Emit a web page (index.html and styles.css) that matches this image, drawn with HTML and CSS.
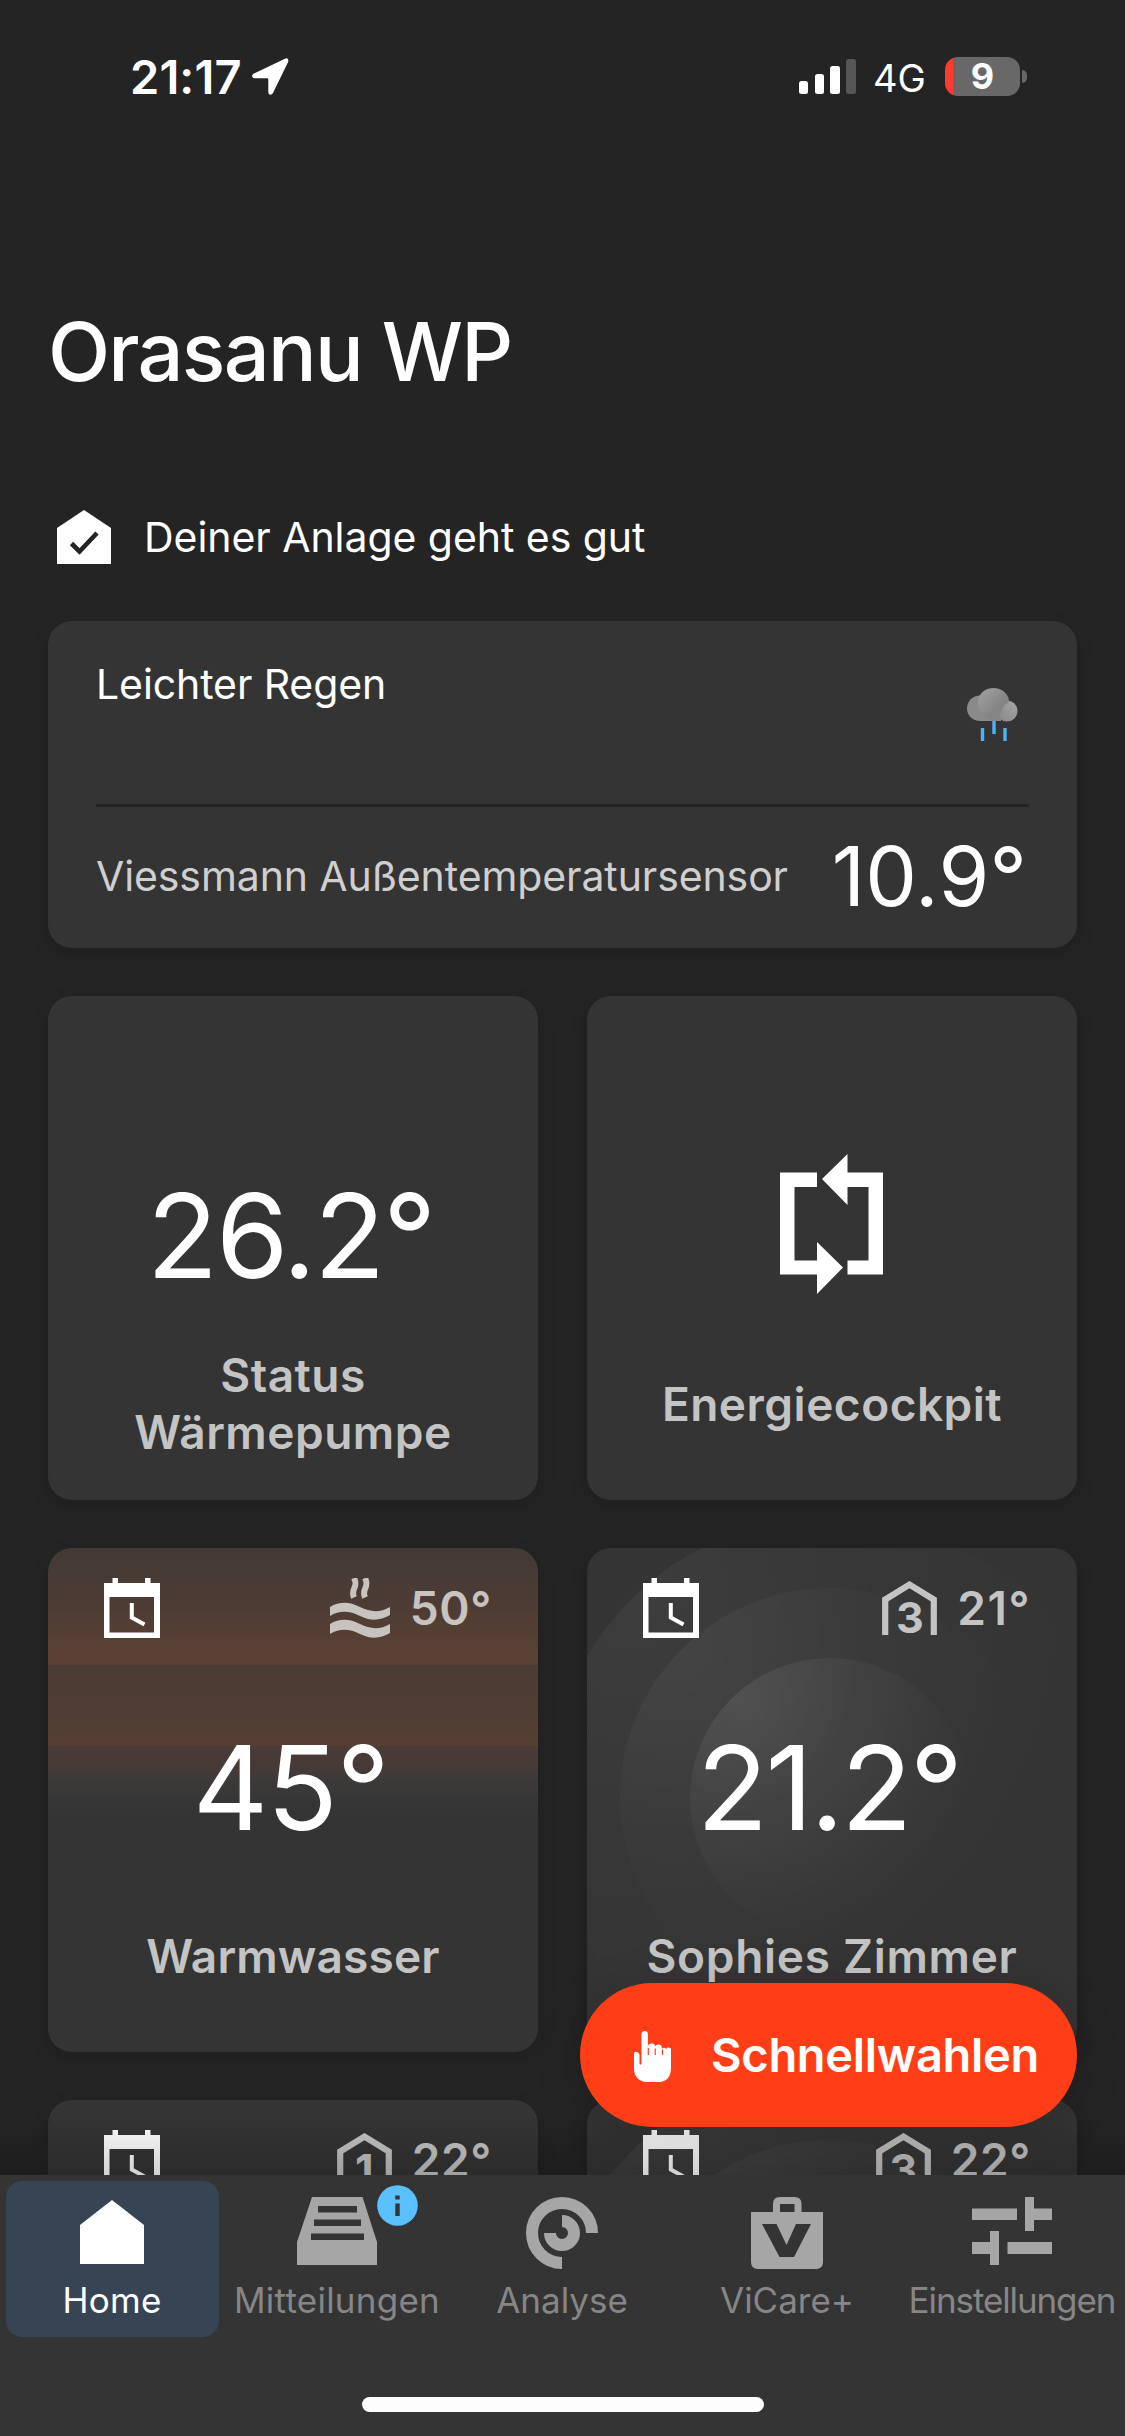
FILE: index.html
```html
<!DOCTYPE html>
<html lang="de">
<head>
<meta charset="utf-8">
<title>Orasanu WP</title>
<link rel="stylesheet" href="styles.css">
</head>
<body>
<svg class="defs" width="0" height="0" aria-hidden="true">
  <defs>
    <radialGradient id="ring" cx=".2" cy=".16" r=".85"><stop offset="0" stop-color="#fff" stop-opacity=".085"/><stop offset=".5" stop-color="#fff" stop-opacity=".035"/><stop offset="1" stop-color="#fff" stop-opacity="0"/></radialGradient>
    <radialGradient id="ring-outer" cx=".15" cy=".15" r=".8"><stop offset="0" stop-color="#fff" stop-opacity=".045"/><stop offset=".5" stop-color="#fff" stop-opacity=".018"/><stop offset="1" stop-color="#fff" stop-opacity="0"/></radialGradient>
  </defs>
  <symbol id="rings" viewBox="0 0 490 504">
    <circle cx="243" cy="250" r="281" fill="url(#ring-outer)"/>
    <circle cx="243" cy="250" r="210" fill="url(#ring-outer)"/>
    <circle cx="243" cy="250" r="140" fill="url(#ring)"/>
  </symbol>
  <symbol id="calendar" viewBox="0 0 56 60">
    <path fill-rule="evenodd" d="M0 5h8.500V0h5.500v5h27V0h5.500v5H56v55H0zM5.500 19v35.500h44.500V19z"/>
    <path d="M27.800 25v14.500L40.500 46.500" fill="none" stroke="currentColor" stroke-width="4"/>
  </symbol>
  <symbol id="house-outline" viewBox="0 0 55 54">
    <path d="M3.200 54V18.500L27.500 3.600 51.800 18.500V54" fill="none" stroke="currentColor" stroke-width="6.200"/>
  </symbol>
</svg>

<div class="screen">
  <header class="statusbar">
    <div class="clock">
      <span class="time">21:17</span>
      <svg class="arrow" viewBox="0 0 37 37"><path d="M33.500.6 2 15.600C-.8 17-.3 20.200 2.800 20.200H15c.9 0 1.300.5 1.300 1.300V34c0 3.200 3.400 3.700 4.800.8L36 4.200C37 1.800 35.600-.4 33.500.6z"/></svg>
    </div>
    <div class="radio">
      <svg class="signal" viewBox="0 0 57 35"><rect x="0" y="22" width="9" height="13" rx="2.500"/><rect x="16" y="15" width="9" height="20" rx="2.500"/><rect x="31" y="7" width="10" height="28" rx="2.500"/><rect x="47" y="0" width="10" height="35" rx="2.500" fill="#555"/></svg>
      <span class="net">4G</span>
      <div class="battery"><span>9</span></div>
      <div class="nub"></div>
    </div>
  </header>

  <main class="content">
    <h1 class="title">Orasanu WP</h1>
    <div class="health">
      <svg class="health-icon" viewBox="0 0 54 54"><path d="M27 0 54 18V54H0V18z"/><path d="M14.500 33.500 22.500 41.500 40 23" fill="none" stroke="#242424" stroke-width="4.600"/></svg>
      <span>Deiner Anlage geht es gut</span>
    </div>

    <section class="weather">
      <div class="weather-top">
        <span class="condition">Leichter Regen</span>
        <svg class="cloud" viewBox="0 0 51 54">
          <defs>
            <linearGradient id="cg1" x1="0" y1="0" x2="1" y2="1"><stop offset="0" stop-color="#a3a3a3"/><stop offset=".6" stop-color="#858585"/></linearGradient>
            <linearGradient id="cg2" x1="0" y1="1" x2="1" y2="0"><stop offset="0" stop-color="#858585"/><stop offset="1" stop-color="#a8a8a8"/></linearGradient>
          </defs>
          <path d="M14 7.500C6 7 0 13 0 20.500S6 33 13 33H34V15z" fill="#8a8a8a"/>
          <circle cx="40" cy="23" r="10.500" fill="url(#cg2)"/>
          <path d="M11 14a15.500 14 0 0 1 31 0Q34 18 32 33H26Q11 27 11 14z" fill="url(#cg1)"/>
          <path d="M15.500 40v13M27 33v13M38 40v13" fill="none" stroke="#4db2f7" stroke-width="3.400"/>
        </svg>
      </div>
      <div class="weather-bottom">
        <span class="sensor">Viessmann Außentemperatursensor</span>
        <span class="outside">10.9°</span>
      </div>
    </section>

    <section class="tiles">
      <article class="tile">
        <div class="tile-head"></div>
        <div class="value v-status">26.2°</div>
        <div class="label">Status<br>Wärmepumpe</div>
      </article>
      <article class="tile">
        <div class="tile-head"></div>
        <div class="value">
          <svg class="cycle" viewBox="0 0 103 140"><path d="M0 18.500H37V33H14.500V106.500H37V88L63 113.500 37 140V120.500H0zM42 25 67.500 0V18.500H103V120.500H67.500V106.500H88.500V33H67.500V51z"/></svg>
        </div>
        <div class="label">Energiecockpit</div>
      </article>

      <article class="tile water">
        <div class="tile-head">
          <svg class="cal"><use href="#calendar"/></svg>
          <div class="target">
            <svg class="waves" viewBox="0 0 60 60">
              <path d="M0 29C10 23 20 24 30 29S50 35 60 29V37C50 43 40 43 30 38S10 32 0 38zM0 46C10 40 20 41 30 46S50 52 60 46V55C50 61 40 61 30 56S10 50 0 56z"/>
              <path d="M24 0C29 10 20 10 24 19.500M35 0C40 10 31 10 35 19.500" fill="none" stroke="currentColor" stroke-width="6"/>
            </svg>
            <span>50°</span>
          </div>
        </div>
        <div class="value v-water">45°</div>
        <div class="label l-water">Warmwasser</div>
      </article>
      <article class="tile room">
        <svg class="rings"><use href="#rings"/></svg>
        <div class="tile-head">
          <svg class="cal"><use href="#calendar"/></svg>
          <div class="target">
            <div class="house"><svg><use href="#house-outline"/></svg><b>3</b></div>
            <span class="t-room">21°</span>
          </div>
        </div>
        <div class="value v-room">21.2°</div>
        <div class="label l-room">Sophies Zimmer</div>
      </article>

      <article class="tile">
        <div class="tile-head">
          <svg class="cal"><use href="#calendar"/></svg>
          <div class="target">
            <div class="house"><svg><use href="#house-outline"/></svg><b>1</b></div>
            <span>22°</span>
          </div>
        </div>
      </article>
      <article class="tile room">
        <svg class="rings"><use href="#rings"/></svg>
        <div class="tile-head">
          <svg class="cal"><use href="#calendar"/></svg>
          <div class="target">
            <div class="house"><svg><use href="#house-outline"/></svg><b>3</b></div>
            <span>22°</span>
          </div>
        </div>
      </article>
    </section>
    <div class="fade"></div>
    <button class="quick">
      <svg class="hand" viewBox="0 0 37 51"><path d="M7.500 3.300a3.200 3.200 0 0 1 6.400 0V16a2.600 2.600 0 0 1 7.300.5v.6a3 3 0 0 1 6.600-.6v1.400a3 3 0 0 1 4.400 0 2.800 2.800 0 0 1 4.800 3.100V37C37 46 32 51 25 51H13C5 51 0 45 0 38V22.500C0 19 5.500 21 5.500 24V32c0 2 2 2 2 0z"/><path d="M14.300 17v7M21.200 17.500v6.500M28.500 18.500v5.500" stroke="#ff3e17" stroke-width="1.200"/></svg>
      <span>Schnellwahlen</span>
    </button>
  </main>

  <nav class="nav">
    <div class="tabs">
      <a class="tab active">
        <svg class="i-home" viewBox="0 0 64 64"><path d="M32 0 64 25V64H0V25z"/></svg>
        <span class="n-home">Home</span>
      </a>
      <a class="tab">
        <svg class="i-inbox" viewBox="0 0 80 68"><path fill-rule="evenodd" d="M15 0H65.500L80 45V68H0V45zM21 9v6.500h39V9zM17 22.500V29h47V22.500zM14 36.500V43h53V36.500z"/></svg>
        <span class="n-inbox">Mitteilungen</span>
        <svg class="badge" viewBox="0 0 41 41"><circle cx="20.500" cy="20.500" r="20.300" fill="#5bc0ff"/><path d="M18.300 10.500h4.400v4h-4.400zM18.300 18.500h4.400V31h-4.400z" fill="#343434"/></svg>
      </a>
      <a class="tab">
        <svg class="i-analyse" viewBox="0 0 72 72"><path d="M66 36A30 30 0 1 0 36 66" fill="none" stroke="currentColor" stroke-width="12"/><path d="M36 24A12 12 0 1 1 24 36" fill="none" stroke="currentColor" stroke-width="12"/></svg>
        <span>Analyse</span>
      </a>
      <a class="tab">
        <svg class="i-bag" viewBox="0 0 72 72"><path fill-rule="evenodd" d="M0 15H22V7Q22 0 29 0H43.500Q50.500 0 50.500 7V15H72V65Q72 72 65 72H7Q0 72 0 65zM29 7V15H43.500V7zM11 27 28.500 60H43L60 27H45L35.500 48 25.500 27z"/></svg>
        <span>ViCare+</span>
      </a>
      <a class="tab">
        <svg class="i-sliders" viewBox="0 0 80 68"><path d="M0 11.500H45V23H0zM53 0h9V11.500H80V23H62V34H53zM0 45H18V34h9V68H18V57H0zM35.500 45H80V57H35.500z"/></svg>
        <span class="n-settings">Einstellungen</span>
      </a>
    </div>
    <div class="indicator"></div>
  </nav>
</div>
</body>
</html>
```
FILE: styles.css
```css
* { box-sizing: border-box; }
body {
  margin: 0;
  background: #242424;
  color: #fff;
  font-family: Inter, "Liberation Sans", sans-serif;
}
svg { display: block; fill: currentColor; flex: none; }
.defs { position: absolute; }
span { white-space: nowrap; }

.screen {
  width: 1125px;
  height: 2436px;
  display: flex;
  flex-direction: column;
  overflow: hidden;
}

/* Status bar */
.statusbar {
  flex: none;
  height: 152px;
  padding: 0 98px 0 130px;
  display: flex;
  justify-content: space-between;
  align-items: center;
}
.clock, .radio { display: flex; align-items: center; }
.time { font-size: 47px; font-weight: 600; letter-spacing: 0.1px; width: 122px; }
.arrow { width: 37px; height: 37px; }
.signal { width: 57px; height: 35px; }
.net { font-size: 38px; width: 71px; padding-left: 17px; margin-right: 18px; padding-top: 3px; }
.battery {
  width: 75px;
  height: 39px;
  border-radius: 13px;
  background: linear-gradient(90deg, #ff3b30 8px, #686868 8px);
  display: flex;
  justify-content: center;
  align-items: center;
  font-size: 36px;
  font-weight: 700;
}
.nub { width: 5px; height: 13px; margin-left: 2px; border-radius: 0 5px 5px 0; background: #686868; }

/* Scrolling content */
.content {
  flex: none;
  position: relative;
  height: 2023px;
  padding: 150px 48px 0;
  overflow: hidden;
}
.title { margin: 0; font-size: 81px; font-weight: 500; line-height: 100px; letter-spacing: -1.75px; }
.health {
  height: 54px;
  margin-top: 108px;
  padding-left: 9px;
  display: flex;
  align-items: center;
  gap: 33px;
  font-size: 41px;
  letter-spacing: -0.05px;
}
.health-icon { width: 54px; height: 54px; }

.weather {
  height: 327px;
  margin-top: 57px;
  padding: 0 48px;
  border-radius: 24px;
  background: #343434;
  box-shadow: 0 6px 18px rgba(0, 0, 0, .16);
}
.weather-top {
  height: 186px;
  display: flex;
  justify-content: space-between;
  border-bottom: 3px solid #242424;
  font-size: 41px;
  letter-spacing: -0.1px;
}
.condition { line-height: 60px; margin-top: 33px; }
.cloud { width: 51px; height: 54px; margin: 67px 11px 0 0; }
.weather-bottom {
  height: 138px;
  display: flex;
  justify-content: space-between;
  align-items: center;
}
.sensor { font-size: 41px; letter-spacing: -0.1px; color: #cfcfcf; }
.outside { font-size: 82px; letter-spacing: 0.2px; margin-right: 2px; }

.tiles {
  margin-top: 48px;
  display: grid;
  grid-template-columns: 490px 490px;
  grid-auto-rows: 504px;
  column-gap: 49px;
  row-gap: 48px;
}
.tile {
  padding-top: 30px;
  border-radius: 24px;
  background: #343434;
  box-shadow: 0 6px 18px rgba(0, 0, 0, .16);
}
.tile-head {
  height: 60px;
  padding: 0 46px 0 56px;
  display: flex;
  justify-content: space-between;
}
.cal { width: 56px; height: 60px; }
.target {
  height: 60px;
  display: flex;
  align-items: center;
  gap: 20px;
  color: #c4c4c4;
  font-size: 46px;
  font-weight: 600;
  letter-spacing: 0.6px;
}
.t-room { letter-spacing: 1.5px; }
.waves { width: 60px; height: 60px; }
.house { width: 55px; height: 60px; padding-top: 3px; display: grid; }
.house svg, .house b { grid-area: 1 / 1; }
.house svg { width: 55px; height: 54px; }
.house b { font-size: 43px; line-height: 60px; padding-top: 6px; text-align: center; font-weight: 700; height: 60px; letter-spacing: 0; }
.value {
  height: 160px;
  margin-top: 69px;
  display: flex;
  justify-content: center;
  align-items: center;
  font-size: 117px;
}
.v-status { letter-spacing: -2.2px; padding-right: 5px; }
.v-room { letter-spacing: -2.8px; padding-right: 7px; }
.v-water { letter-spacing: -1.5px; padding-right: 5px; }
.cycle { width: 103px; height: 140px; margin: 0 1px 22px 0; }
.label {
  height: 144px;
  margin-top: 17px;
  display: flex;
  justify-content: center;
  align-items: center;
  text-align: center;
  font-size: 46px;
  line-height: 57px;
  font-weight: 600;
  letter-spacing: 0.5px;
  color: #c4c4c4;
}
.l-water { letter-spacing: 0.15px; }
.l-room { letter-spacing: 0.7px; }
.water {
  background:
    linear-gradient(180deg,
      #433a36 0, #4a3b35 45px, #563f34 90px, #5c3f34 117px,
      #4a3b35 117px, #4f3d34 160px, #573f34 198px,
      #4a3b37 198px, #453a37 222px, #3c3a39 232px, #343434 266px);
}
.water .target { color: #c9c3c0; }
.room { position: relative; overflow: hidden; isolation: isolate; }
.rings { position: absolute; left: 0; top: 0; z-index: -1; width: 490px; height: 504px; }

/* Fade above the tab bar */
.fade {
  position: absolute;
  left: 0;
  right: 0;
  bottom: 0;
  height: 60px;
  background: linear-gradient(180deg, rgba(0, 0, 0, 0), rgba(0, 0, 0, .18));
}
.quick {
  position: absolute;
  right: 48px;
  bottom: 48px;
  width: 497px;
  height: 144px;
  padding: 0 38px 2px 54px;
  border: 0;
  border-radius: 72px;
  background: #ff3e17;
  color: #fff;
  font: 600 47px Inter, "Liberation Sans", sans-serif;
  letter-spacing: -0.3px;
  display: flex;
  align-items: center;
  justify-content: space-between;
  box-shadow: 0 6px 48px rgba(0, 0, 0, .16);
}
.hand { width: 37px; height: 51px; margin-top: 4px; }

/* Tab bar */
.nav { flex: none; height: 261px; background: #343434; }
.tabs { height: 222px; display: flex; }
.tab {
  position: relative;
  width: 213px;
  height: 156px;
  margin: 6px;
  padding: 16px 1px 0 0;
  display: flex;
  flex-direction: column;
  align-items: center;
  border-radius: 16px;
  color: #a6a6a6;
}
.tab span { margin-top: auto; height: 60px; line-height: 60px; margin-bottom: 7px; font-size: 35px; color: #868686; }
.tab.active { background: #374453; color: #fff; }
.tab.active span { color: #fff; }
.tab .n-home, .tab .n-inbox { letter-spacing: 0.25px; }
.tab .n-settings { letter-spacing: -1.1px; }
.i-home { width: 64px; height: 64px; margin-top: 3px; }
.i-inbox, .i-sliders { width: 80px; height: 68px; }
.i-analyse, .i-bag { width: 72px; height: 72px; }
.badge { position: absolute; left: 146px; top: 4px; width: 41px; height: 41px; }
.indicator { width: 402px; height: 15px; margin: 0 auto; border-radius: 8px; background: #fdfdfd; }
```
